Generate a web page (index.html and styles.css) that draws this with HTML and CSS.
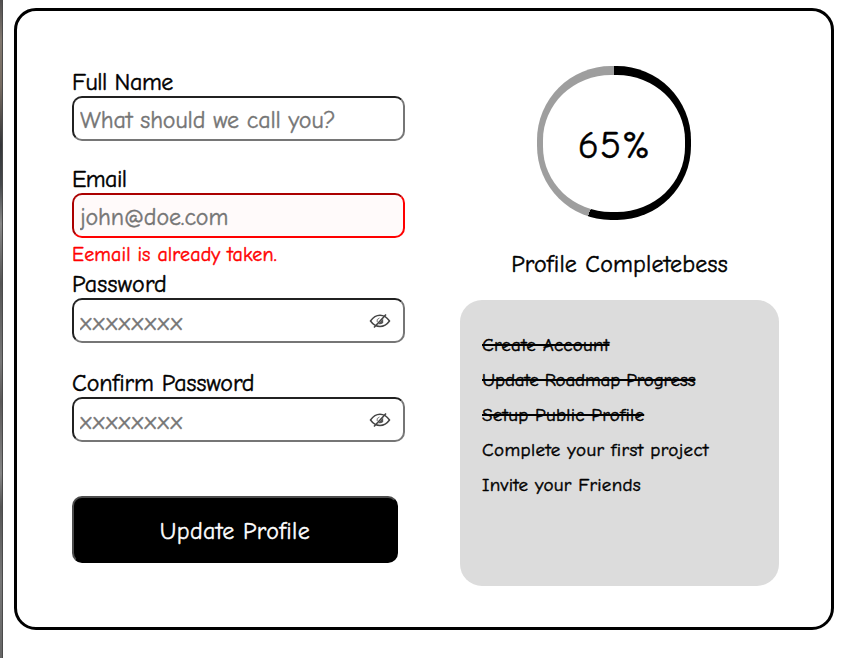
FILE: index.html
```html
<!DOCTYPE html>
<html lang="en">
<head>
<meta charset="utf-8">
<title>Update Profile</title>
<link rel="stylesheet" href="styles.css">
</head>
<body>
<div class="backdrop"></div>
<main class="card">
  <form class="form">
    <div class="field">
      <label class="label name-label" for="name">Full Name</label>
      <input class="input name-input" id="name" type="text" placeholder="What should we call you?">
    </div>
    <div class="field email">
      <label class="label email-label" for="email">Email</label>
      <input class="input invalid" id="email" type="text" placeholder="john@doe.com">
      <p class="error"><span>Eemail is already taken.</span></p>
    </div>
    <div class="field">
      <label class="label password-label" for="pw">Password</label>
      <div class="secret">
        <input class="input masked" id="pw" type="text" placeholder="xxxxxxxx">
        <svg class="eye" viewBox="0 0 22 16"><path d="M1.5 8C4 4.5 7 2.3 11 2.3S18 4.5 20.5 8C18 11.5 15 13.5 11 13.5S4 11.5 1.5 8Z"/><path d="M17 1.5 5 14.5"/><path class="pupil" d="M14.2 5.5V9.5Q13.8 11.2 11.2 11.2H9Z"/><path class="thin" d="M8.2 9V6.6L10.5 5"/></svg>
      </div>
    </div>
    <div class="field">
      <label class="label confirm-label" for="pw2">Confirm Password</label>
      <div class="secret">
        <input class="input masked" id="pw2" type="text" placeholder="xxxxxxxx">
        <svg class="eye" viewBox="0 0 22 16"><path d="M1.5 8C4 4.5 7 2.3 11 2.3S18 4.5 20.5 8C18 11.5 15 13.5 11 13.5S4 11.5 1.5 8Z"/><path d="M17 1.5 5 14.5"/><path class="pupil" d="M14.2 5.5V9.5Q13.8 11.2 11.2 11.2H9Z"/><path class="thin" d="M8.2 9V6.6L10.5 5"/></svg>
      </div>
    </div>
    <button class="submit" type="button">Update Profile</button>
  </form>
  <section class="progress">
    <div class="ring"><div class="ring-inner"><span class="percent">65%</span></div></div>
    <h2 class="title">Profile Completebess</h2>
    <ul class="tasks">
      <li><span class="done create">Create Account</span></li>
      <li><span class="done roadmap">Update Roadmap Progress</span></li>
      <li><span class="done setup">Setup Public Profile</span></li>
      <li><span class="project">Complete your first project</span></li>
      <li><span class="invite">Invite your Friends</span></li>
    </ul>
  </section>
</main>
</body>
</html>
```
FILE: styles.css
```css
* { box-sizing: border-box; }
body {
  margin: 0;
  height: 658px;
  display: flex;
  overflow: hidden;
  background: #fff;
  color: #000;
  font-family: "Comic Sans MS", "Comic Neue", Lato, sans-serif;
  font-variant-ligatures: none;
  -webkit-text-stroke: 0.45px currentColor;
}
.backdrop {
  width: 3px;
  height: 658px;
  border-right: 1px solid #4a4a4a;
  background: linear-gradient(#514f50, #81786f 6%, #776c62 13%, #343639 22%, #45484b 28%, #888 34%, #555 43%, #777 55%, #5b5959 61%, #858585 72%, #555 77%, #777 88%, #666);
}
.card {
  display: flex;
  width: 820px;
  height: 622px;
  margin: 8px 0 0 11px;
  padding: 55px 52px 0 55px;
  border: 3px solid #000;
  border-radius: 22px;
}
.form { width: 333px; padding-top: 2px; }
.field { height: 97px; }
.field.email { height: 105px; }
.field:nth-child(3) { height: 99px; }
.field:nth-child(4) { height: 127px; }
.label {
  display: block;
  height: 28px;
  font-size: 24px;
  line-height: 28px;
  white-space: nowrap;
}
.name-label { letter-spacing: -0.42px; }
.email-label { letter-spacing: -0.6px; }
.password-label { letter-spacing: 0.27px; }
.confirm-label { letter-spacing: -0.05px; }
.input {
  display: block;
  width: 333px;
  height: 45px;
  padding: 3px 6px 1px;
  border: 2px inset #767676;
  border-radius: 10px;
  background: #fff;
  font: 24px "Comic Sans MS", "Comic Neue", Lato, sans-serif;
  letter-spacing: -0.13px;
}
.input::placeholder { color: #757575; opacity: 1; -webkit-text-stroke: 0.4px #757575; }
.invalid { border-color: #f00; background: #fffafa; }
.masked { padding-top: 3px; letter-spacing: 1.6px; }
.error {
  margin: 4px 0 0;
  color: #f00;
  font-size: 20px;
  line-height: 26px;
  letter-spacing: 0.13px;
}
.secret { position: relative; }
.eye {
  position: absolute;
  left: 297px;
  top: 15px;
  width: 22px;
  height: 16px;
  fill: none;
  stroke: #444;
  stroke-width: 1.5;
}
.eye .pupil { fill: #555; stroke: none; }
.eye .thin { stroke-width: 1; stroke: #777; }
.submit {
  display: block;
  width: 326px;
  height: 67px;
  padding: 3px 0 0;
  border: 2px outset #000;
  border-top-color: #4c4c4c;
  border-left-color: #4c4c4c;
  border-radius: 10px;
  background: #000;
  color: #fff;
  font: 24px "Comic Sans MS", "Comic Neue", Lato, sans-serif;
  letter-spacing: 0.36px;
  -webkit-text-stroke: 0.4px #fff;
}
.progress { width: 319px; margin-left: 55px; }
.ring {
  width: 154px;
  height: 154px;
  margin-left: 77px;
  padding: 9px 6px 8px;
  border-radius: 74px;
  background: conic-gradient(#000 55.4%, #9e9e9e 55.4%);
}
.ring-inner {
  height: 137px;
  border-radius: 68px / 65px;
  background: #fff;
  display: flex;
  align-items: center;
  justify-content: center;
}
.percent { font-size: 39px; padding: 3px 0 0 1px; letter-spacing: 1px; }
.title {
  margin: 28px 0 0;
  height: 52px;
  font-size: 24px;
  line-height: 32px;
  font-weight: 400;
  letter-spacing: 0.19px;
  white-space: nowrap;
  text-align: center;
}
.tasks {
  height: 286px;
  margin: 0;
  padding: 28px 22px;
  border-radius: 22px;
  background: #dcdcdc;
  list-style: none;
  font-size: 19px;
  line-height: 35px;
  white-space: nowrap;
}
.create, .setup { letter-spacing: 0.25px; }
.roadmap { letter-spacing: -0.17px; }
.project { letter-spacing: 0.38px; }
.invite { letter-spacing: 0.28px; }
.done { text-decoration: line-through; text-decoration-thickness: 2px; }
```
